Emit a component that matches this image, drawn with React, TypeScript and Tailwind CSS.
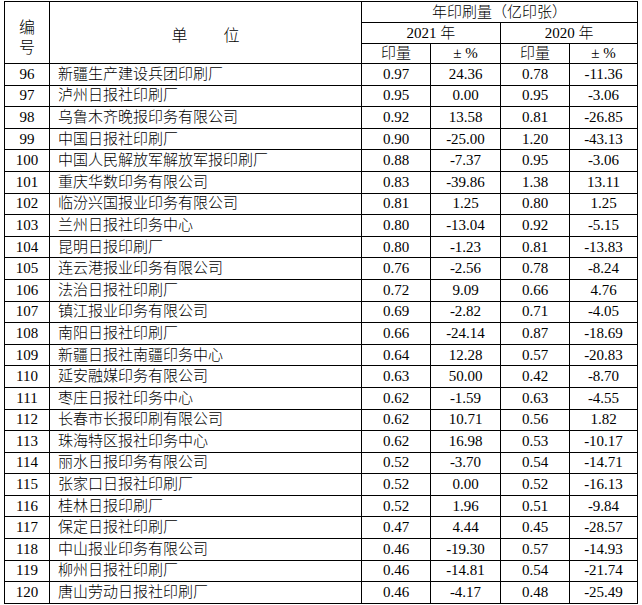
const rows: [number, string, string, string, string, string][] = [
  [96, "新疆生产建设兵团印刷厂", "0.97", "24.36", "0.78", "-11.36"],
  [97, "泸州日报社印刷厂", "0.95", "0.00", "0.95", "-3.06"],
  [98, "乌鲁木齐晚报印务有限公司", "0.92", "13.58", "0.81", "-26.85"],
  [99, "中国日报社印刷厂", "0.90", "-25.00", "1.20", "-43.13"],
  [100, "中国人民解放军解放军报印刷厂", "0.88", "-7.37", "0.95", "-3.06"],
  [101, "重庆华数印务有限公司", "0.83", "-39.86", "1.38", "13.11"],
  [102, "临汾兴国报业印务有限公司", "0.81", "1.25", "0.80", "1.25"],
  [103, "兰州日报社印务中心", "0.80", "-13.04", "0.92", "-5.15"],
  [104, "昆明日报印刷厂", "0.80", "-1.23", "0.81", "-13.83"],
  [105, "连云港报业印务有限公司", "0.76", "-2.56", "0.78", "-8.24"],
  [106, "法治日报社印刷厂", "0.72", "9.09", "0.66", "4.76"],
  [107, "镇江报业印务有限公司", "0.69", "-2.82", "0.71", "-4.05"],
  [108, "南阳日报社印刷厂", "0.66", "-24.14", "0.87", "-18.69"],
  [109, "新疆日报社南疆印务中心", "0.64", "12.28", "0.57", "-20.83"],
  [110, "延安融媒印务有限公司", "0.63", "50.00", "0.42", "-8.70"],
  [111, "枣庄日报社印务中心", "0.62", "-1.59", "0.63", "-4.55"],
  [112, "长春市长报印刷有限公司", "0.62", "10.71", "0.56", "1.82"],
  [113, "珠海特区报社印务中心", "0.62", "16.98", "0.53", "-10.17"],
  [114, "丽水日报印务有限公司", "0.52", "-3.70", "0.54", "-14.71"],
  [115, "张家口日报社印刷厂", "0.52", "0.00", "0.52", "-16.13"],
  [116, "桂林日报印刷厂", "0.52", "1.96", "0.51", "-9.84"],
  [117, "保定日报社印刷厂", "0.47", "4.44", "0.45", "-28.57"],
  [118, "中山报业印务有限公司", "0.46", "-19.30", "0.57", "-14.93"],
  [119, "柳州日报社印刷厂", "0.46", "-14.81", "0.54", "-21.74"],
  [120, "唐山劳动日报社印刷厂", "0.46", "-4.17", "0.48", "-25.49"],
];

const cjk = "font-['Liberation_Serif','Noto_Sans_CJK_SC',serif]";
const base = "border border-black p-0 text-center font-light";
const cell = `${base} leading-none`;

export default function App() {
  return (
    <div className={`bg-white pl-1 pt-px text-black text-[15px] ${cjk}`}>
      <table className="table-fixed border-collapse w-[633px]">
        <colgroup>
          <col className="w-[45px]" />
          <col className="w-[312px]" />
          <col className="w-[69px]" />
          <col className="w-[70px]" />
          <col className="w-[69px]" />
          <col className="w-[68px]" />
        </colgroup>
        <thead>
          <tr className="h-[21px]">
            <th rowSpan={3} className={`${base} pt-[10px] leading-[20px] text-[16px]`}>
              编<br />号
            </th>
            <th rowSpan={3} className={`${base} pt-[6px] leading-none text-[16px]`}>
              <span className="inline-block w-[68px] [text-align-last:justify]">单 位</span>
            </th>
            <th colSpan={4} className={cell}>年印刷量（亿印张）</th>
          </tr>
          <tr className="h-[21px]">
            <th colSpan={2} className={cell}>2021 年</th>
            <th colSpan={2} className={cell}>2020 年</th>
          </tr>
          <tr className="h-[20px]">
            <th className={cell}>印量</th>
            <th className={cell}>± %</th>
            <th className={cell}>印量</th>
            <th className={cell}>± %</th>
          </tr>
        </thead>
        <tbody>
          {rows.map(([no, name, a, b, c, d]) => (
            <tr key={no} className="h-[21.6px]">
              <td className={cell}>{no}</td>
              <td className={`${cell} text-left pl-2`}>{name}</td>
              <td className={cell}>{a}</td>
              <td className={cell}>{b}</td>
              <td className={cell}>{c}</td>
              <td className={cell}>{d}</td>
            </tr>
          ))}
        </tbody>
      </table>
    </div>
  );
}
